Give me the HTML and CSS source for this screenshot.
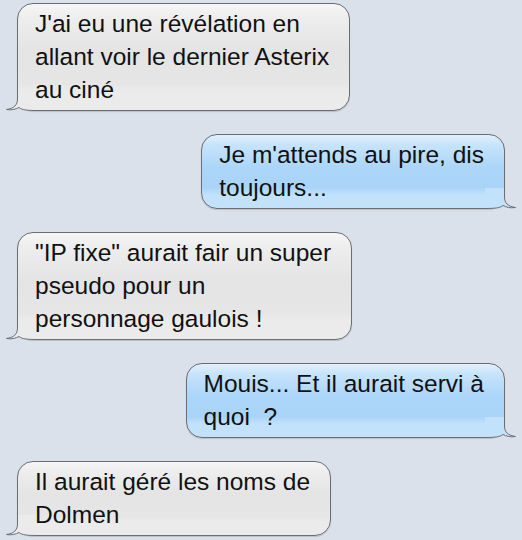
FILE: index.html
```html
<!DOCTYPE html>
<html lang="fr">
<head>
    <meta charset="UTF-8">
    <meta name="viewport" content="width=device-width, initial-scale=1.0">
    <title>Messages</title>
    <link rel="stylesheet" href="styles.css">
</head>
<body>
    <div class="thread">
        <div class="bubble received">
            <svg class="tail" width="32" height="22" viewBox="0 0 32 22">
                <path class="tail-fill" d="M12.5 0 L12.5 9 C12.5 15 9 18.5 1.5 19.5 C7 20.5 11 19 14 17.5 C17 20 22 20.5 32 20.5 L32 0 Z"/>
                <path class="tail-line" d="M12.5 0 L12.5 9 C12.5 15 9 18.5 1.5 19.5 C7 20.5 11 19 14 17.5 C17 20 22 20.5 32 20.5"/>
            </svg>
            <p class="text">J'ai eu une révélation en<br>allant voir le dernier Asterix<br>au ciné</p>
        </div>

        <div class="bubble sent">
            <svg class="tail" width="32" height="22" viewBox="0 0 32 22">
                <path class="tail-fill" d="M12.5 0 L12.5 9 C12.5 15 9 18.5 1.5 19.5 C7 20.5 11 19 14 17.5 C17 20 22 20.5 32 20.5 L32 0 Z"/>
                <path class="tail-line" d="M12.5 0 L12.5 9 C12.5 15 9 18.5 1.5 19.5 C7 20.5 11 19 14 17.5 C17 20 22 20.5 32 20.5"/>
            </svg>
            <p class="text">Je m'attends au pire, dis<br>toujours...</p>
        </div>

        <div class="bubble received">
            <svg class="tail" width="32" height="22" viewBox="0 0 32 22">
                <path class="tail-fill" d="M12.5 0 L12.5 9 C12.5 15 9 18.5 1.5 19.5 C7 20.5 11 19 14 17.5 C17 20 22 20.5 32 20.5 L32 0 Z"/>
                <path class="tail-line" d="M12.5 0 L12.5 9 C12.5 15 9 18.5 1.5 19.5 C7 20.5 11 19 14 17.5 C17 20 22 20.5 32 20.5"/>
            </svg>
            <p class="text">"IP fixe" aurait fair un super<br>pseudo pour un<br>personnage gaulois !</p>
        </div>

        <div class="bubble sent">
            <svg class="tail" width="32" height="22" viewBox="0 0 32 22">
                <path class="tail-fill" d="M12.5 0 L12.5 9 C12.5 15 9 18.5 1.5 19.5 C7 20.5 11 19 14 17.5 C17 20 22 20.5 32 20.5 L32 0 Z"/>
                <path class="tail-line" d="M12.5 0 L12.5 9 C12.5 15 9 18.5 1.5 19.5 C7 20.5 11 19 14 17.5 C17 20 22 20.5 32 20.5"/>
            </svg>
            <p class="text">Mouis... Et il aurait servi à<br>quoi&nbsp; ?</p>
        </div>

        <div class="bubble received">
            <svg class="tail" width="32" height="22" viewBox="0 0 32 22">
                <path class="tail-fill" d="M12.5 0 L12.5 9 C12.5 15 9 18.5 1.5 19.5 C7 20.5 11 19 14 17.5 C17 20 22 20.5 32 20.5 L32 0 Z"/>
                <path class="tail-line" d="M12.5 0 L12.5 9 C12.5 15 9 18.5 1.5 19.5 C7 20.5 11 19 14 17.5 C17 20 22 20.5 32 20.5"/>
            </svg>
            <p class="text">Il aurait géré les noms de<br>Dolmen</p>
        </div>
    </div>
</body>
</html>
```

FILE: styles.css
```css
body {
    margin: 0;
    background-color: #dae1eb;
    font-family: "Liberation Sans", Arial, sans-serif;
    color: #111;
}
.thread {
    display: flex;
    flex-direction: column;
    gap: 23px;
    padding: 3px 17px;
}
.bubble {
    position: relative;
    width: fit-content;
    padding: 3px 20px 4px 17px;
    border: 1px solid #6a6d72;
    border-radius: 16px;
    box-shadow: 0 1px 1px rgba(0, 0, 0, 0.15);
}
.bubble .text {
    position: relative;
    margin: 0;
    font-size: 24.5px;
    line-height: 33px;
    white-space: nowrap;
}
.received {
    align-self: flex-start;
    background: linear-gradient(to bottom, #f6f6f6 0%, #eeeeee 12%, #e4e4e4 45%, #e6e6e6 75%, #ebebeb 82%, #ebebeb 100%);
}
.sent {
    align-self: flex-end;
    background: linear-gradient(to bottom, #e2f0fc 0%, #c6e3fb 14%, #abd5f9 45%, #a9d4f8 72%, #c2e1fb 82%, #c2e1fb 100%);
}
.tail {
    position: absolute;
    bottom: -2px;
    left: -13px;
    overflow: visible;
}
.sent .tail {
    left: auto;
    right: -13px;
    transform: scaleX(-1);
}
.tail-fill {
    stroke: none;
}
.received .tail-fill {
    fill: #ebebeb;
}
.sent .tail-fill {
    fill: #c2e1fb;
}
.tail-line {
    fill: none;
    stroke: #6a6d72;
    stroke-width: 1;
}
```
